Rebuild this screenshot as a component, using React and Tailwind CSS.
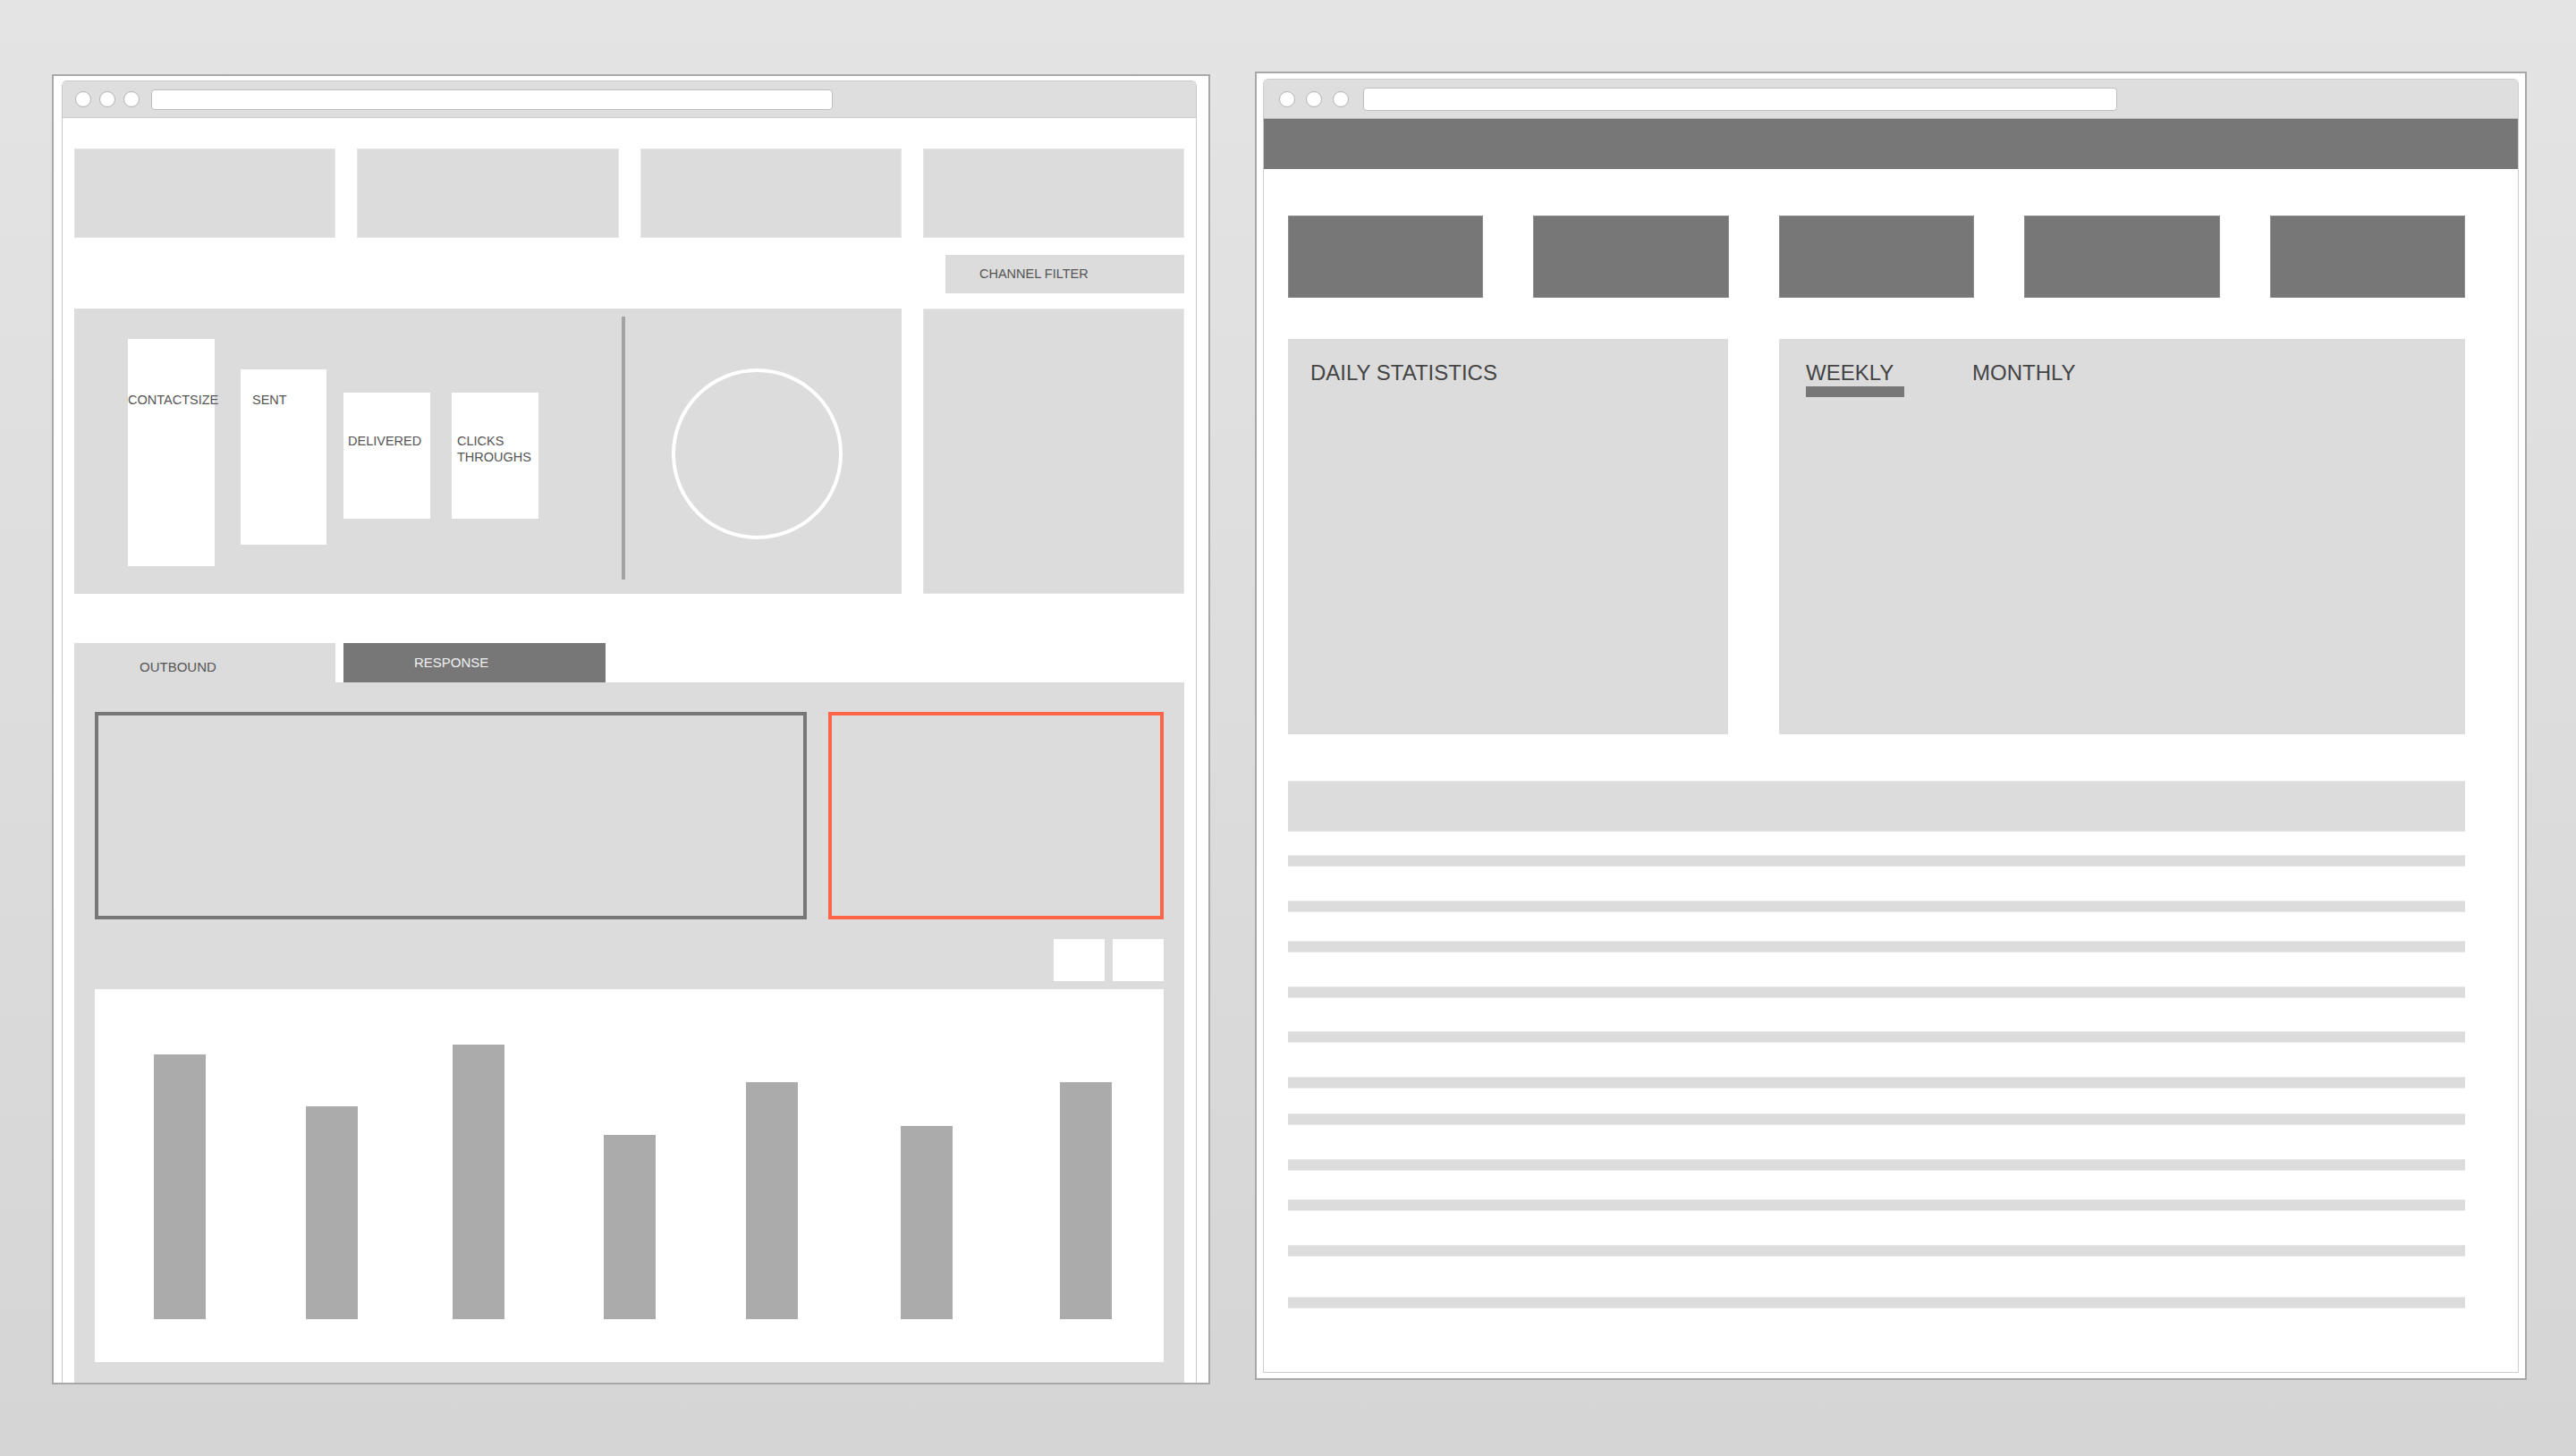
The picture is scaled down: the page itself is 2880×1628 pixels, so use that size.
const font = "font-['Liberation_Sans',Arial,sans-serif]";

function Toolbar({ small }) {
  // browser chrome: three dots and the address bar
  if (small) {
    return (
      <div className="flex h-[41px] shrink-0 items-center border-b border-[#c9c9c9] bg-[#dedede] pl-[14px]">
        <div className="flex gap-[9px]">
          <span className="h-[18px] w-[18px] rounded-full border border-[#b3b3b3] bg-white" />
          <span className="h-[18px] w-[18px] rounded-full border border-[#b3b3b3] bg-white" />
          <span className="h-[18px] w-[18px] rounded-full border border-[#b3b3b3] bg-white" />
        </div>
        <div className="ml-[13px] h-[23px] w-[762px] rounded-[4px] border border-[#bdbdbd] bg-white" />
      </div>
    );
  }
  return (
    <div className="flex h-[44px] shrink-0 items-center border-b border-[#bdbdbd] bg-[#dedede] pl-[17px]">
      <div className="flex gap-[12px]">
        <span className="h-[18px] w-[18px] rounded-full border border-[#b3b3b3] bg-white" />
        <span className="h-[18px] w-[18px] rounded-full border border-[#b3b3b3] bg-white" />
        <span className="h-[18px] w-[18px] rounded-full border border-[#b3b3b3] bg-white" />
      </div>
      <div className="ml-[16px] h-[26px] w-[843px] rounded-[4px] border border-[#bdbdbd] bg-white" />
    </div>
  );
}

// bar heights and the space before each bar
const bars = [
  { h: 296, m: "ml-[66px]" },
  { h: 238, m: "ml-[112px]" },
  { h: 307, m: "ml-[106px]" },
  { h: 206, m: "ml-[111px]" },
  { h: 265, m: "ml-[101px]" },
  { h: 216, m: "ml-[115px]" },
  { h: 265, m: "ml-[120px]" },
];

function LeftWindow() {
  return (
    <div className="mt-[83px] ml-[58px] h-[1465px] w-[1295px] shrink-0 overflow-hidden border-2 border-[#a8a8a8] bg-white pt-[5px] pr-[13px] pl-[9px]">
      <div className="flex flex-col rounded-t-[6px] border border-[#c8c8c8] bg-white">
        <Toolbar small />
        <div className="flex flex-col px-[13px] pt-[34px]">
          {/* top cards */}
          <div className="grid grid-cols-4 gap-[24px]">
            <div className="h-[100px] border border-[#e6e6e6] bg-[#dcdcdc]" />
            <div className="h-[100px] border border-[#e6e6e6] bg-[#dcdcdc]" />
            <div className="h-[100px] border border-[#e6e6e6] bg-[#dcdcdc]" />
            <div className="h-[100px] border border-[#e6e6e6] bg-[#dcdcdc]" />
          </div>

          <div className="mt-[19px] flex justify-end">
            <div className="flex h-[43px] w-[267px] items-center bg-[#dcdcdc] pl-[38px] text-[14.5px] text-[#555]">
              CHANNEL FILTER
            </div>
          </div>

          {/* funnel + donut */}
          <div className="mt-[17px] flex gap-[24px]">
            <div className="flex h-[319px] w-[925px] items-start bg-[#dcdcdc] pl-[60px] text-[14.5px] leading-[17.5px] text-[#555]">
              <div className="mt-[34px] h-[254px] w-[97px] bg-white pt-[60px] whitespace-nowrap">CONTACTSIZE</div>
              <div className="mt-[68px] ml-[29px] h-[196px] w-[96px] bg-white pt-[26px] pl-[13px]">SENT</div>
              <div className="mt-[94px] ml-[19px] h-[141px] w-[97px] bg-white pt-[46px] pl-[5px]">DELIVERED</div>
              <div className="mt-[94px] ml-[24px] h-[141px] w-[97px] bg-white pt-[46px] pl-[6px]">
                CLICKS
                <br />
                THROUGHS
              </div>
              <div className="mt-[9px] ml-[93px] h-[294px] w-[4px] bg-[#a3a3a3]" />
              <div className="mt-[67px] ml-[52px] h-[191px] w-[191px] rounded-full border-[4px] border-white" />
            </div>
            <div className="h-[319px] flex-1 border border-[#e6e6e6] bg-[#dcdcdc]" />
          </div>

          {/* tabs */}
          <div className="mt-[55px] flex items-end gap-[9px]">
            <div className="flex h-[44px] w-[292px] items-center bg-[#dcdcdc] pt-[10px] pl-[73px] text-[15px] text-[#555]">
              OUTBOUND
            </div>
            <div className="flex h-[44px] w-[293px] items-center bg-[#777] pl-[79px] text-[15px] text-[#f2f2f2]">
              RESPONSE
            </div>
          </div>
          <div className="flex flex-col bg-[#dcdcdc] px-[23px] pt-[33px] pb-[80px]">
            <div className="flex gap-[24px]">
              <div className="h-[232px] w-[796px] border-[4px] border-[#777]" />
              <div className="h-[232px] flex-1 border-[4px] border-[#fd6549]" />
            </div>
            <div className="mt-[22px] flex justify-end gap-[9px]">
              <div className="h-[47px] w-[57px] bg-white" />
              <div className="h-[47px] w-[57px] bg-white" />
            </div>
            <div className="mt-[9px] flex h-[417px] items-end bg-white pb-[48px]">
              {bars.map((b, i) => (
                <div key={i} className={`${b.m} w-[58px] bg-[#ababab]`} style={{ height: b.h }} />
              ))}
            </div>
          </div>
        </div>
      </div>
    </div>
  );
}

const lines = [
  "mt-[26px]",
  "mt-[38px]",
  "mt-[32px]",
  "mt-[38px]",
  "mt-[37px]",
  "mt-[38px]",
  "mt-[28px]",
  "mt-[38px]",
  "mt-[32px]",
  "mt-[38px]",
  "mt-[45px]",
];

function RightWindow() {
  return (
    <div className="mt-[80px] ml-[50px] h-[1463px] w-[1422px] shrink-0 border-2 border-[#a8a8a8] bg-white px-[7px] pt-[6px] pb-[6px]">
      <div className="flex h-full flex-col rounded-t-[6px] border border-[#cdcdcd] bg-white">
        <Toolbar />
        <div className="h-[56px] shrink-0 bg-[#777]" />
        <div className="flex w-[1343px] flex-col pt-[52px] pl-[27px]">
          <div className="grid grid-cols-5 gap-[56px]">
            <div className="h-[92px] border border-[#8e8e8e] bg-[#777]" />
            <div className="h-[92px] border border-[#8e8e8e] bg-[#777]" />
            <div className="h-[92px] border border-[#8e8e8e] bg-[#777]" />
            <div className="h-[92px] border border-[#8e8e8e] bg-[#777]" />
            <div className="h-[92px] border border-[#8e8e8e] bg-[#777]" />
          </div>

          <div className="mt-[46px] flex gap-[57px]">
            <div className="h-[442px] w-[492px] bg-[#dcdcdc] pt-[24px] pl-[25px] text-[24px] leading-[28px] text-[#444]">
              DAILY STATISTICS
            </div>
            <div className="flex h-[442px] flex-1 items-start bg-[#dcdcdc] pt-[24px] pl-[30px] text-[24px] leading-[28px] text-[#444]">
              <div className="flex flex-col">
                <span>WEEKLY</span>
                <span className="mt-[1px] h-[12px] w-[110px] bg-[#777]" />
              </div>
              <span className="ml-[76px]">MONTHLY</span>
            </div>
          </div>

          <div className="mt-[52px] h-[57px] border-y border-[#e6e6e6] bg-[#dcdcdc]" />
          {lines.map((m, i) => (
            <div key={i} className={`${m} h-[13px] border-y border-[#e8e8e8] bg-[#dcdcdc]`} />
          ))}
        </div>
      </div>
    </div>
  );
}

export default function App() {
  return (
    <div className={`${font} flex h-[1628px] w-[2880px] items-start overflow-hidden bg-linear-to-b from-[#e4e4e4] to-[#d5d5d5]`}>
      <LeftWindow />
      <RightWindow />
    </div>
  );
}
